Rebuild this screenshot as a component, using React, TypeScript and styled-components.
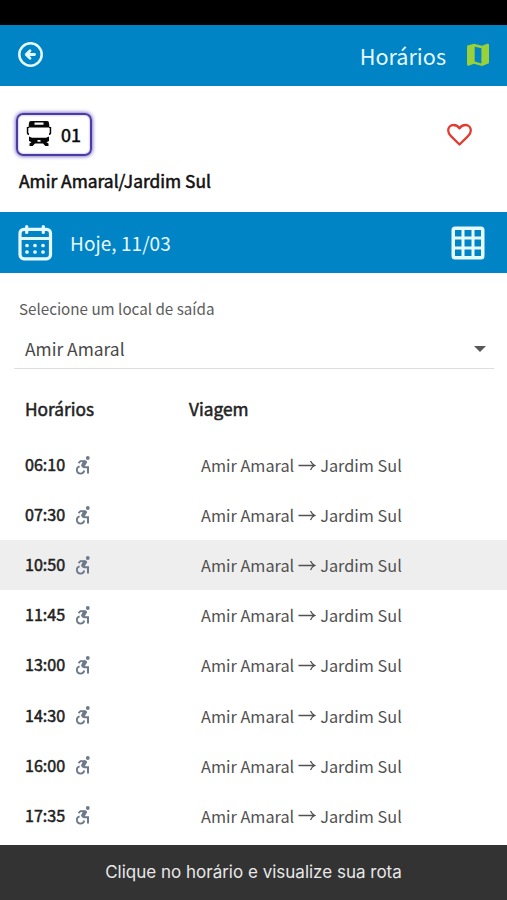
import React from 'react';
import styled, { createGlobalStyle } from 'styled-components';

const Global = createGlobalStyle`
  * { box-sizing: border-box; }
  body { margin: 0; background: #fff; font-family: "Noto Sans CJK SC", "Noto Sans", sans-serif; color: #484848; }
`;

const Screen = styled.div`
  width: 100%;
  height: 900px;
  display: flex;
  flex-direction: column;
  overflow: hidden;
  white-space: nowrap;
  line-height: 1;
`;

const StatusBar = styled.div`
  height: 25px;
  flex: none;
  background: #000;
`;

const Bar = styled.header<{ $end: number; $lift: number }>`
  height: 61px;
  flex: none;
  display: flex;
  align-items: center;
  padding: 0 ${(p) => p.$end}px ${(p) => p.$lift}px 17px;
  background: #0084c6;
  color: #e6f9ff;
`;

const BarTitle = styled.h1`
  margin: 3px 20px 0 auto;
  font-size: 21.6px;
  font-weight: 400;
`;

const DateLabel = styled.span`
  margin: 0 auto 0 17px;
  font-size: 19px;
  letter-spacing: 0.05px;
`;

const RouteCard = styled.section`
  height: 126px;
  flex: none;
  padding: 27px 34px 0 16px;
`;

const RouteTop = styled.div`
  display: flex;
  align-items: center;
  justify-content: space-between;
`;

const LineBadge = styled.div`
  width: 76px;
  height: 43px;
  display: flex;
  align-items: center;
  gap: 9px;
  padding: 0 0 2px 8px;
  border: 2px solid #4b3ba3;
  border-radius: 7px;
  box-shadow: 0 0 4px #4b3bb0, inset 0 0 2px #8a80d0;
  color: #080808;
  font-size: 18px;
  -webkit-text-stroke: 0.5px currentColor;
  svg { stroke: none; }
`;

const RouteName = styled.h2`
  margin: 16px 0 0 3px;
  font-size: 17.4px;
  font-weight: 400;
  color: #111;
  -webkit-text-stroke: 0.55px currentColor;
`;

const FieldLabel = styled.label`
  margin: 27px 0 0 19px;
  height: 17px;
  line-height: 17px;
  flex: none;
  font-size: 15.2px;
  color: #5c5c5c;
`;

const Select = styled.div`
  flex: none;
  height: 40px;
  margin: 12px 13px 0 14px;
  padding: 0 8px 0 11px;
  display: flex;
  align-items: center;
  justify-content: space-between;
  border-bottom: 1px solid #dedede;
  font-size: 17.4px;
`;

const Caret = styled.i`
  border: 6px solid transparent;
  border-top-color: #585858;
  border-bottom: 0;
`;

const TableHead = styled.div`
  flex: none;
  height: 71px;
  padding: 8px 25px 0;
  display: grid;
  grid-template-columns: 164px 1fr;
  align-items: center;
  font-size: 17.3px;
  color: #222;
  -webkit-text-stroke: 0.5px currentColor;
`;

const Row = styled.div<{ $active?: boolean }>`
  flex: none;
  height: 50.1px;
  padding: 0 0 0 25px;
  display: grid;
  grid-template-columns: 176px 1fr;
  align-items: center;
  background: ${(p) => (p.$active ? '#eeeeee' : 'transparent')};
`;

const Time = styled.div`
  display: flex;
  align-items: center;
  gap: 10px;
  height: 20px;
  line-height: 18px;
  font-size: 16.1px;
  color: #202020;
  -webkit-text-stroke: 0.5px currentColor;
`;

const Clock = styled.span`
  height: 20px;
`;

const Trip = styled.div`
  display: flex;
  align-items: center;
  gap: 4px;
  height: 20px;
  line-height: 20px;
  font-size: 16.3px;
  color: #515151;
`;

const Toast = styled.footer`
  flex: none;
  margin-top: auto;
  height: 55px;
  display: flex;
  align-items: center;
  justify-content: center;
  background: #333;
  color: #e8e8e8;
  font: 400 17px/1 Inter, sans-serif;
`;

const BackIcon = () => (
  <svg width="27" height="27" viewBox="0 0 27 27" fill="none" stroke="currentColor" strokeLinecap="round" strokeLinejoin="round">
    <circle cx="13.5" cy="13.5" r="11.2" strokeWidth="2.5" />
    <path d="M17.5 13.5H10M13 9.8l-3.8 3.7 3.8 3.7" strokeWidth="2.8" />
  </svg>
);

const MapIcon = () => (
  <svg width="24" height="24" viewBox="0 0 24 24" fill="#9bd138">
    <path fillRule="evenodd" d="M1.5 2.6 8 .8l8 2L21.3.7Q23 .4 23 2v18.2L16 23l-8-2.3-5.4 2Q1 23 1 21.3V3.5Q1 2.8 1.5 2.6ZM8.7 3.7v14.8l6.7 2V5.3Z" />
  </svg>
);

const BusIcon = () => (
  <svg width="26" height="27" viewBox="0 0 26 27" fill="currentColor">
    <path fillRule="evenodd" d="M5 1h16q2 0 2 2l.5 4.500h-21L3 3q0-2 2-2ZM8.500 2.500v2.200h9V2.500Z" />
    <path d="M.8 7H3v1H2.300v5L3 13.500V15H2L.8 13.500ZM25.200 7H23v1h.7v5l-.7.500V15h1l1.200-1.500Z" />
    <path fillRule="evenodd" d="M3 16.500 6 17.700h14l3-1.200v4.500l-2.500 1.300 2 1.200V26h-3.200L17 23.500H9L6.700 26H3.500v-2.500l2-1.200L3 21ZM11.500 20v1.700h3V20Z" />
  </svg>
);

const HeartIcon = () => (
  <svg width="27" height="24" viewBox="0 0 27 24" fill="none" stroke="#e23b30" strokeWidth="2.3" strokeLinejoin="round">
    <path d="M13.500 21.500 5.200 13.400C3 11.200 2.200 9.500 2.200 7.400 2.200 4.200 4.600 2 7.500 2c2.500 0 4.800 1.300 6 3.300C14.700 3.300 17 2 19.500 2c2.900 0 5.300 2.200 5.300 5.400 0 2.100-.8 3.800-3 6Z" />
  </svg>
);

const CalendarIcon = () => (
  <svg width="36" height="37" viewBox="0 0 36 37" fill="none" stroke="currentColor" strokeWidth="3.200" strokeLinecap="round">
    <rect x="3" y="5.300" width="30.500" height="29.500" rx="4" />
    <path d="M3.500 14.500h29.500M9.700 2.500v6M26.300 2.500v6" />
    <path d="M10 21.500h.01M18 21.500h.01M26 21.500h.01M10 28h.01M18 28h.01M26 28h.01" strokeWidth="3.700" />
  </svg>
);

const GridIcon = () => (
  <svg width="34" height="34" viewBox="0 0 34 34">
    <path fill="currentColor" fillRule="evenodd" d="M4 .5h26a3.500 3.500 0 0 1 3.500 3.500v26a3.500 3.500 0 0 1-3.500 3.500H4A3.500 3.500 0 0 1 .5 30V4A3.500 3.500 0 0 1 4 .5ZM4 4v6.500h6.500V4Zm9.500 0v6.500h7V4Zm10 0v6.500H30V4ZM4 13.500v7h6.500v-7Zm9.500 0v7h7v-7Zm10 0v7H30v-7ZM4 23.500V30h6.500v-6.500Zm9.500 0V30h7v-6.500Zm10 0V30H30v-6.500Z" />
  </svg>
);

const WheelchairIcon = () => (
  <svg width="16" height="19" viewBox="0 0 16 19" fill="none" stroke="#6c7a8b" strokeWidth="1.800">
    <circle cx="12.800" cy="2" r="1.900" fill="#6c7a8b" stroke="none" />
    <path d="M3.500 7.200 5.500 5.200H10" />
    <path d="M10.800 4.300 12.300 6 9.800 10.300H14V17.500H12V12.200H9Q6.500 11.500 6 9.500L8 5Z" fill="#6c7a8b" stroke="none" />
    <path d="M4.600 10.300A3.700 3.700 0 1 0 9.200 14.500" strokeWidth="1.800" />
  </svg>
);

const ArrowIcon = () => (
  <svg width="18" height="11" viewBox="0 0 18 11" fill="none" stroke="currentColor" strokeWidth="1.300">
    <path d="M.5 5.500h16M12.500 1q1.500 3.300 4.300 4.500-2.800 1.200-4.300 4.500" />
  </svg>
);

const times = ['06:10', '07:30', '10:50', '11:45', '13:00', '14:30', '16:00', '17:35'];

export default function App() {
  return (
    <Screen>
      <Global />
      <StatusBar />
      <Bar $end={17} $lift={2}>
        <BackIcon />
        <BarTitle>Horários</BarTitle>
        <MapIcon />
      </Bar>
      <RouteCard>
        <RouteTop>
          <LineBadge><BusIcon />01</LineBadge>
          <HeartIcon />
        </RouteTop>
        <RouteName>Amir Amaral/Jardim Sul</RouteName>
      </RouteCard>
      <Bar as="div" $end={22} $lift={0}>
        <CalendarIcon />
        <DateLabel>Hoje, 11/03</DateLabel>
        <GridIcon />
      </Bar>
      <FieldLabel>Selecione um local de saída</FieldLabel>
      <Select>Amir Amaral<Caret /></Select>
      <TableHead><span>Horários</span><span>Viagem</span></TableHead>
      {times.map((time) => (
        <Row key={time} $active={time === '10:50'}>
          <Time><Clock>{time}</Clock><WheelchairIcon /></Time>
          <Trip>Amir Amaral<ArrowIcon />Jardim Sul</Trip>
        </Row>
      ))}
      <Toast>Clique no horário e visualize sua rota</Toast>
    </Screen>
  );
}
